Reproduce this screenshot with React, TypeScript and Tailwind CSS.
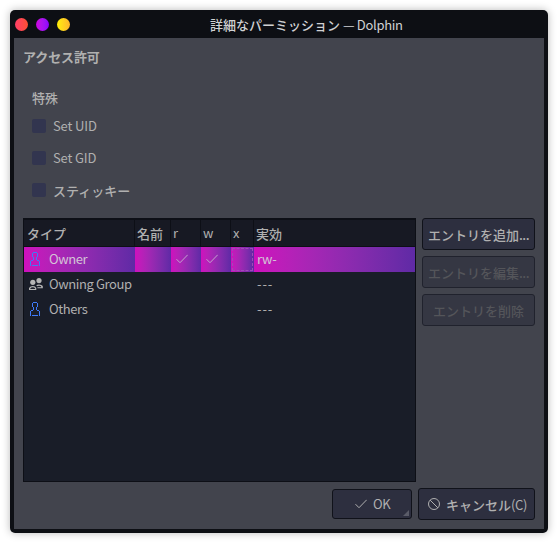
import type { ReactNode } from "react";

function UserIcon() {
  return (
    <svg width="12" height="14" viewBox="0 0 12 14" fill="none" stroke="#3f7bf8" shapeRendering="crispEdges">
      <path d="M3 .5h4M2.5 1v4M7.5 1v4M3 5.5h1M6 5.5h1M3.500 6v2M6.500 6v2M1 8.5h2M7 8.5h2M.5 9v5M9.500 9v5M2 13.500h6" />
    </svg>
  );
}

function GroupIcon() {
  return (
    <svg width="14" height="12" viewBox="0 0 14 12" fill="#b5b5b5">
      <circle cx="3.8" cy="4.3" r="2.6" />
      <circle cx="10" cy="2.6" r="2.6" />
      <path d="M0 12V10Q1.200 8 3.800 8t3.500 2v2zM1.300 11h4.800v-.600Q5.500 9.200 3.800 9.200t-2.500 1.200z" fillRule="evenodd" />
      <path d="M7.200 7.500Q8 6.500 10 6.500q2.800 0 3.800 1.600v2.100H8.400V9.200h4.100q-.5-1.400-2.500-1.400-1.200 0-1.800.5z" />
    </svg>
  );
}

function Check({ className }: { className: string }) {
  return (
    <svg className={className} width="12" height="10" viewBox="0 0 12 10" fill="none" stroke="currentColor" strokeWidth="1">
      <path d="M.5 5.2L4 8.7 11.7.8" />
    </svg>
  );
}

const grid = "grid grid-cols-[111px_36px_30px_30px_23px_161px]";
const selected = "bg-linear-to-r from-[#cf0fbd] to-[#5f2aa5]";

function Option({ children, jp }: { children: ReactNode; jp?: boolean }) {
  return (
    <div className="flex h-[14px] items-center gap-[7px]">
      <span className="size-[14px] rounded-[2px] bg-[#32354f]" />
      <span className={`leading-none ${jp ? "font-medium" : "pb-[2px] tracking-[-0.15px]"}`}>{children}</span>
    </div>
  );
}

function Row({ icon, label, effective, active }: { icon: ReactNode; label: string; effective: string; active?: boolean }) {
  const bg = active ? selected : "";
  return (
    <div className={`${grid} h-[25px] ${active ? "text-[#d3c4d6]" : ""}`}>
      <div className={`flex items-center ${bg}`}>
        <span className="ml-[5px] flex w-[14px] -translate-y-px pl-px">{icon}</span>
        <span className="ml-[6px] pb-[2px] tracking-[-0.4px] whitespace-nowrap">{label}</span>
      </div>
      <div className={bg} />
      <div className={`flex items-center pl-[5px] ${bg}`}>{active && <Check className="-translate-y-px text-[#c4a6cf]" />}</div>
      <div className={`flex items-center pl-[5px] ${bg}`}>{active && <Check className="-translate-y-px text-[#c4a6cf]" />}</div>
      <div className={`p-px ${bg}`}>{active && <div className="h-full border border-dashed border-[#a04bb8]" />}</div>
      <div className={`flex items-center pb-[2px] pl-[3px] ${active ? "tracking-[-0.2px]" : "tracking-[0.9px]"} ${bg}`}>{effective}</div>
    </div>
  );
}

function SideButton({ children, dots, disabled }: { children: ReactNode; dots?: boolean; disabled?: boolean }) {
  return (
    <button
      disabled={disabled}
      className={`flex h-8 w-[113px] items-center justify-center rounded-[3px] border font-medium whitespace-nowrap ${
        disabled ? "border-[#20222d] bg-[#353743] text-[#54555a]" : "border-[#10121a] bg-[#2d2f3f]"
      }`}
    >
      {children}
      {dots && <span className="tracking-[-0.6px]">...</span>}
    </button>
  );
}

function HeaderCell({ children, latin, last }: { children: ReactNode; latin?: boolean; last?: boolean }) {
  return (
    <div className={`flex items-center pl-[2px] ${latin ? "pb-px" : "pt-px font-medium"} ${last ? "" : "border-r border-[#0d0f16]"}`}>
      {children}
    </div>
  );
}

export default function App() {
  return (
    <div className="h-[543px] w-[558px] bg-white p-[10px] font-['Noto_Sans_CJK_JP',sans-serif] text-[13px] leading-none text-[#b0b0b0]">
      <div className="flex h-[523px] w-[538px] flex-col rounded-[5px] bg-[#0d0f14] px-1 pb-1 shadow-[0_0_9px_rgba(0,0,0,0.28)]">
        <header className="flex h-7 shrink-0 items-center">
          <div className="flex w-[196px] gap-2 pl-px">
            <span className="size-[13px] rounded-full bg-linear-to-r from-[#ff3e66] to-[#ff5030]" />
            <span className="size-[13px] rounded-full bg-linear-to-r from-[#ce00e0] to-[#8c00ff]" />
            <span className="size-[13px] rounded-full bg-linear-to-r from-[#fff000] to-[#ffb42a]" />
          </div>
          <h1 className="font-medium whitespace-nowrap text-[#d0d1d3]">
            詳細なパーミッション <span className="font-normal tracking-[-0.3px]">— Dolphin</span>
          </h1>
        </header>
        <main className="flex flex-1 flex-col bg-[#42444d] pr-[9px] pl-[9px]">
          <h2 className="mt-3 h-[13px] font-bold tracking-[-0.1px]">アクセス許可</h2>
          <section className="mt-7 pl-[9px]">
            <h3 className="h-[13px] font-medium">特殊</h3>
            <div className="mt-[15px] flex flex-col gap-[18px]">
              <Option>Set UID</Option>
              <Option>Set GID</Option>
              <Option jp>スティッキー</Option>
            </div>
          </section>
          <div className="mt-[21px] flex gap-[6px]">
            <div className="h-[264px] w-[393px] border border-[#0d0f16] bg-[#191d28]">
              <div className={`${grid} h-7 border-t border-b border-[#0d0f16] bg-[#171923]`}>
                <HeaderCell><span className="pl-px">タイプ</span></HeaderCell>
                <HeaderCell>名前</HeaderCell>
                <HeaderCell latin>r</HeaderCell>
                <HeaderCell latin>w</HeaderCell>
                <HeaderCell latin>x</HeaderCell>
                <HeaderCell last>実効</HeaderCell>
              </div>
              <Row icon={<UserIcon />} label="Owner" effective="rw-" active />
              <Row icon={<div className="-ml-px"><GroupIcon /></div>} label="Owning Group" effective="---" />
              <Row icon={<UserIcon />} label="Others" effective="---" />
            </div>
            <div className="flex flex-col gap-[6px]">
              <SideButton dots>エントリを追加</SideButton>
              <SideButton dots disabled>エントリを編集</SideButton>
              <SideButton disabled>エントリを削除</SideButton>
            </div>
          </div>
          <footer className="mt-[6px] flex items-center justify-end gap-[6px]">
            <button className="relative flex h-[30px] w-20 items-center rounded-[3px] border border-[#10121a] bg-[#2d2f3f] pl-[22px]">
              <Check className="" />
              <span className="ml-[6px] pb-px tracking-[-0.5px]">OK</span>
              <span className="absolute right-[2px] bottom-[2px] size-[6px] bg-[#5a5c68] [clip-path:polygon(100%_0,100%_100%,0_100%)]" />
            </button>
            <button className="flex h-8 w-[117px] items-center rounded-[3px] border border-[#10121a] bg-[#2d2f3f] pl-[9px] whitespace-nowrap">
              <svg width="12" height="12" viewBox="0 0 12 12" fill="none" stroke="currentColor">
                <circle cx="6" cy="6" r="5.5" />
                <path d="M2.1 2.1l7.8 7.8" />
              </svg>
              <span className="ml-[6px]"><span className="font-medium">キャンセル</span><span className="tracking-[-0.4px]">(C)</span></span>
            </button>
          </footer>
        </main>
      </div>
    </div>
  );
}
